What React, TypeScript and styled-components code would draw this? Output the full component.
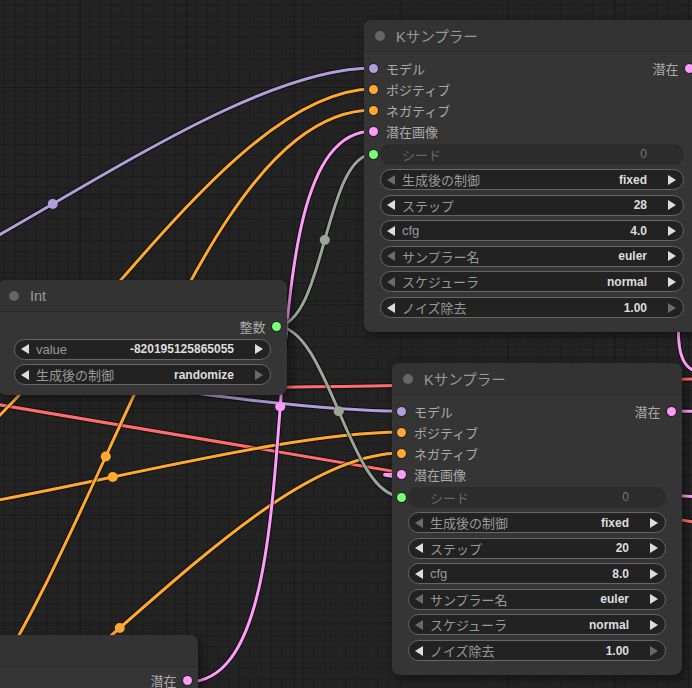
import React from 'react';
import styled, { createGlobalStyle } from 'styled-components';

const GlobalStyle = createGlobalStyle`
  html, body {
    margin: 0;
    padding: 0;
    background: #222;
  }
  body {
    font-family: "Liberation Sans", Arial, "Noto Sans CJK JP", sans-serif;
  }
`;

const Canvas = styled.div`
  position: relative;
  width: 692px;
  height: 688px;
  overflow: hidden;
  background-color: #232323;
  background-image:
    linear-gradient(90deg, rgba(0, 0, 0, 0.22) 1px, transparent 1px),
    linear-gradient(rgba(0, 0, 0, 0.22) 1px, transparent 1px),
    linear-gradient(90deg, rgba(0, 0, 0, 0.18) 1px, transparent 1px),
    linear-gradient(rgba(0, 0, 0, 0.18) 1px, transparent 1px);
  background-size: 107px 107px, 107px 107px, 10.7px 10.7px, 10.7px 10.7px;
  background-position: -27px -20px, -27px -20px, 4px 5px, 4px 5px;
`;

const Wires = styled.svg`
  position: absolute;
  left: 0;
  top: 0;
`;

const Node = styled.div<{ $x: number; $y: number; $w: number; $h: number }>`
  position: absolute;
  left: ${({ $x }) => $x}px;
  top: ${({ $y }) => $y}px;
  width: ${({ $w }) => $w}px;
  height: ${({ $h }) => $h}px;
  background: #353535;
  border-radius: 8px;
  box-shadow: 3px 3px 8px rgba(0, 0, 0, 0.45);
  display: flex;
  flex-direction: column;
`;

const TitleBar = styled.div`
  box-sizing: border-box;
  height: 32px;
  flex: none;
  display: flex;
  align-items: center;
  gap: 11px;
  padding-left: 11px;
  background: #333;
  border-radius: 8px 8px 0 0;
  border-bottom: 1px solid #2b2b2b;
`;

const TitleDot = styled.span`
  width: 10px;
  height: 10px;
  border-radius: 50%;
  background: #666;
`;

const TitleText = styled.span`
  color: #999;
  font-size: 14.5px;
`;

const Body = styled.div<{ $pad: number }>`
  display: flex;
  flex-direction: column;
  padding-top: ${({ $pad }) => $pad}px;
`;

const SlotRow = styled.div`
  height: 21px;
  flex: none;
  display: flex;
  align-items: center;
  font-size: 13px;
  color: #aaa;
`;

const InSlot = styled.div`
  display: flex;
  align-items: center;
  gap: 8px;
  padding-left: 5px;
`;

const OutSlot = styled.div`
  display: flex;
  align-items: center;
  gap: 6px;
  padding-right: 6.5px;
  margin-left: auto;
`;

const Dot = styled.span<{ $color: string }>`
  width: 9px;
  height: 9px;
  border-radius: 50%;
  flex: none;
  background: ${({ $color }) => $color};
  box-shadow: 0 0 0 1px rgba(0, 0, 0, 0.35);
`;

const SeedRow = styled.div`
  height: 21px;
  flex: none;
  margin-top: 2px;
  display: flex;
  align-items: center;
  padding: 0 16px 0 5px;
  gap: 2px;
`;

const WidgetList = styled.div<{ $top: number }>`
  display: flex;
  flex-direction: column;
  gap: 4.6px;
  padding: 0 16px;
  margin-top: ${({ $top }) => $top}px;
`;

const Widget = styled.div<{ $disabled?: boolean }>`
  box-sizing: border-box;
  height: 21px;
  flex: 1 0 auto;
  display: flex;
  align-items: center;
  padding: 0 7px 0 6px;
  border-radius: 11px;
  border: 1px solid ${({ $disabled }) => ($disabled ? 'transparent' : '#666')};
  background: ${({ $disabled }) => ($disabled ? '#2c2c2c' : '#222')};
  font-size: 13px;
  white-space: nowrap;
`;

const ArrowLeft = styled.span<{ $dim?: boolean; $hidden?: boolean }>`
  width: 0;
  height: 0;
  border-top: 5px solid transparent;
  border-bottom: 5px solid transparent;
  border-right: 8px solid ${({ $dim, $hidden }) => ($hidden ? 'transparent' : $dim ? '#6a6a6a' : '#ddd')};
`;

const ArrowRight = styled.span<{ $dim?: boolean; $hidden?: boolean }>`
  width: 0;
  height: 0;
  margin-left: 21px;
  border-top: 5px solid transparent;
  border-bottom: 5px solid transparent;
  border-left: 8px solid ${({ $dim, $hidden }) => ($hidden ? 'transparent' : $dim ? '#6a6a6a' : '#ddd')};
`;

const WidgetLabel = styled.span<{ $disabled?: boolean }>`
  flex: 1;
  margin-left: 7px;
  color: ${({ $disabled }) => ($disabled ? '#666' : '#999')};
`;

const WidgetValue = styled.span<{ $disabled?: boolean }>`
  font-size: 12px;
  font-weight: ${({ $disabled }) => ($disabled ? 'normal' : 'bold')};
  color: ${({ $disabled }) => ($disabled ? '#777' : '#ddd')};
`;

const C = {
  model: '#b39ddb',
  cond: '#ffa931',
  latent: '#ff9cf9',
  int: '#9aa698',
  intDot: '#77ff77',
  vae: '#ff6e6e',
};

type WidgetDef = { label: string; value: string; dimL?: boolean; dimR?: boolean };

function NumberWidget({ w }: { w: WidgetDef }) {
  return (
    <Widget>
      <ArrowLeft $dim={w.dimL} />
      <WidgetLabel>{w.label}</WidgetLabel>
      <WidgetValue>{w.value}</WidgetValue>
      <ArrowRight $dim={w.dimR} />
    </Widget>
  );
}

function KSampler({ x, y, w, steps, cfg }: { x: number; y: number; w: number; steps: string; cfg: string }) {
  const widgets: WidgetDef[] = [
    { label: '生成後の制御', value: 'fixed', dimL: true },
    { label: 'ステップ', value: steps },
    { label: 'cfg', value: cfg },
    { label: 'サンプラー名', value: 'euler', dimL: true },
    { label: 'スケジューラ', value: 'normal', dimL: true },
    { label: 'ノイズ除去', value: '1.00', dimR: true },
  ];
  return (
    <Node $x={x} $y={y} $w={w} $h={312}>
      <TitleBar>
        <TitleDot />
        <TitleText>Kサンプラー</TitleText>
      </TitleBar>
      <Body $pad={5.5}>
        <SlotRow>
          <InSlot><Dot $color={C.model} />モデル</InSlot>
          <OutSlot>潜在<Dot $color={C.latent} /></OutSlot>
        </SlotRow>
        <SlotRow>
          <InSlot><Dot $color={C.cond} />ポジティブ</InSlot>
        </SlotRow>
        <SlotRow>
          <InSlot><Dot $color={C.cond} />ネガティブ</InSlot>
        </SlotRow>
        <SlotRow>
          <InSlot><Dot $color={C.latent} />潜在画像</InSlot>
        </SlotRow>
        <SeedRow>
          <Dot $color={C.intDot} />
          <Widget $disabled>
            <ArrowLeft $hidden />
            <WidgetLabel $disabled>シード</WidgetLabel>
            <WidgetValue $disabled>0</WidgetValue>
            <ArrowRight $hidden />
          </Widget>
        </SeedRow>
        <WidgetList $top={4.6}>
          {widgets.map((wd) => (
            <NumberWidget key={wd.label} w={wd} />
          ))}
        </WidgetList>
      </Body>
    </Node>
  );
}

type Pt = [number, number];

function link(a: Pt, b: Pt) {
  const d = Math.hypot(b[0] - a[0], b[1] - a[1]) * 0.25;
  const c1: Pt = [a[0] + d, a[1]];
  const c2: Pt = [b[0] - d, b[1]];
  const path = `M ${a[0]} ${a[1]} C ${c1[0]} ${c1[1]}, ${c2[0]} ${c2[1]}, ${b[0]} ${b[1]}`;
  const mid: Pt = [
    (a[0] + 3 * c1[0] + 3 * c2[0] + b[0]) / 8,
    (a[1] + 3 * c1[1] + 3 * c2[1] + b[1]) / 8,
  ];
  return { path, mid };
}

// slot positions on the canvas
const modelSrc: Pt = [-268, 340];
const posSrc: Pt = [-176, 522];
const negSrc: Pt = [-162, 803];
const latentSrc: Pt = [187, 682];
const upscaleSrc: Pt = [1000, 520];
const intOut: Pt = [276, 326];
const k1Out: Pt = [689, 68];
const k2Out: Pt = [671, 411];
const k1In = (i: number): Pt => [373.5, [68, 89, 110, 131, 154][i]];
const k2In = (i: number): Pt => [401.5, [411, 432, 453, 474, 496.5][i]];

const links: { a: Pt; b: Pt; color: string }[] = [
  { a: modelSrc, b: k1In(0), color: C.model },
  { a: modelSrc, b: k2In(0), color: C.model },
  { a: posSrc, b: k1In(1), color: C.cond },
  { a: posSrc, b: k2In(1), color: C.cond },
  { a: negSrc, b: k1In(2), color: C.cond },
  { a: negSrc, b: k2In(2), color: C.cond },
  { a: latentSrc, b: k1In(3), color: C.latent },
  { a: upscaleSrc, b: k2In(3), color: C.latent },
  { a: k1Out, b: [702, 372], color: C.latent },
  { a: k2Out, b: [920, 420], color: C.latent },
  { a: intOut, b: k1In(4), color: C.int },
  { a: intOut, b: k2In(4), color: C.int },
];

const rawWires: { d: string; color: string }[] = [
  { d: 'M 150 388 C 400 388, 600 380, 800 377', color: C.vae },
  { d: 'M -100 388 C 200 440, 500 490, 800 540', color: C.vae },
];

function WireLayer() {
  const built = links.map((l) => ({ ...link(l.a, l.b), color: l.color }));
  return (
    <Wires width={692} height={688} viewBox="0 0 692 688">
      <g fill="none" strokeLinecap="round">
        {rawWires.map((w, i) => (
          <g key={`r${i}`}>
            <path d={w.d} stroke="rgba(0,0,0,0.55)" strokeWidth={5} />
            <path d={w.d} stroke={w.color} strokeWidth={3} />
          </g>
        ))}
        {built.map((l, i) => (
          <g key={`l${i}`}>
            <path d={l.path} stroke="rgba(0,0,0,0.55)" strokeWidth={5} />
            <path d={l.path} stroke={l.color} strokeWidth={3} />
          </g>
        ))}
      </g>
      {built.map((l, i) => (
        <circle key={`m${i}`} cx={l.mid[0]} cy={l.mid[1]} r={5} fill={l.color} />
      ))}
    </Wires>
  );
}

export default function App() {
  return (
    <>
      <GlobalStyle />
      <Canvas>
        <WireLayer />

        <KSampler x={364} y={20} w={336} steps="28" cfg="4.0" />

        <Node $x={-2} $y={280} $w={289} $h={115}>
          <TitleBar>
            <TitleDot />
            <TitleText>Int</TitleText>
          </TitleBar>
          <Body $pad={3.5}>
            <SlotRow>
              <OutSlot>整数<Dot $color={C.intDot} /></OutSlot>
            </SlotRow>
            <WidgetList $top={2}>
              <NumberWidget w={{ label: 'value', value: '-820195125865055' }} />
              <NumberWidget w={{ label: '生成後の制御', value: 'randomize', dimR: true }} />
            </WidgetList>
          </Body>
        </Node>

        <KSampler x={392} y={363} w={290} steps="20" cfg="8.0" />

        <Node $x={-100} $y={635} $w={298} $h={120}>
          <TitleBar />
          <Body $pad={2.5}>
            <SlotRow>
              <OutSlot>潜在<Dot $color={C.latent} /></OutSlot>
            </SlotRow>
          </Body>
        </Node>
      </Canvas>
    </>
  );
}
